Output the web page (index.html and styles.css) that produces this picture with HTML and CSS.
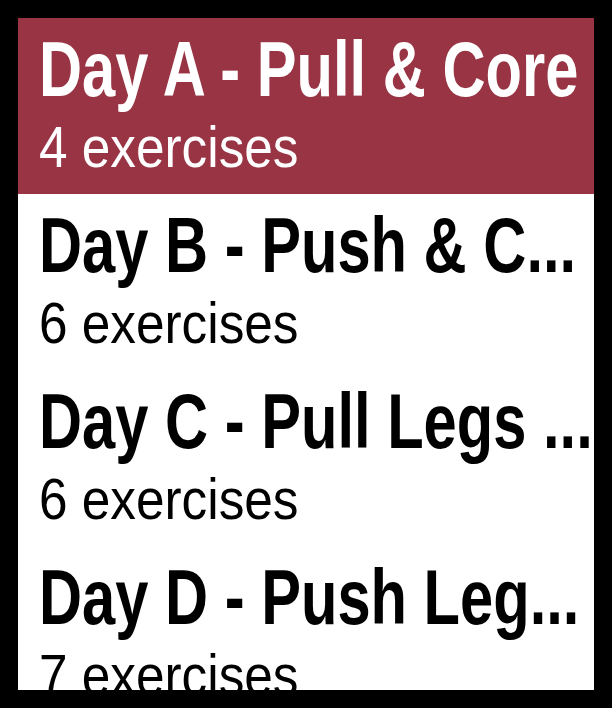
FILE: index.html
```html
<!DOCTYPE html>
<html lang="en">
<head>
<meta charset="utf-8">
<title>Workouts</title>
<link rel="stylesheet" href="styles.css">
</head>
<body>
  <div class="watch">
    <ul class="menu">
      <li class="cell is-selected">
        <span class="cell-title">Day A - Pull &amp; Core</span>
        <span class="cell-sub">4 exercises</span>
      </li>
      <li class="cell">
        <span class="cell-title">Day B - Push &amp; C...</span>
        <span class="cell-sub">6 exercises</span>
      </li>
      <li class="cell">
        <span class="cell-title">Day C - Pull Legs ...</span>
        <span class="cell-sub">6 exercises</span>
      </li>
      <li class="cell">
        <span class="cell-title">Day D - Push Leg...</span>
        <span class="cell-sub">7 exercises</span>
      </li>
    </ul>
  </div>
</body>
</html>
```

FILE: styles.css
```css
html, body {
  margin: 0;
  padding: 0;
  background: #000;
}

body {
  width: 612px;
  height: 708px;
  padding: 18px;
  box-sizing: border-box;
}

.watch {
  width: 576px;
  height: 672px;
  background: #fff;
  overflow: hidden;
}

.menu {
  list-style: none;
  margin: 0;
  padding: 0;
}

.cell {
  height: 176px;
  box-sizing: border-box;
  padding: 12px 0 0 21px;
  display: flex;
  flex-direction: column;
  gap: 11px;
  overflow: hidden;
  background: #fff;
  color: #000;
  font-family: "Liberation Sans", Arial, sans-serif;
}

.cell.is-selected {
  background: #983444;
  color: #fff;
}

.cell-title,
.cell-sub {
  display: block;
  white-space: nowrap;
  transform-origin: left center;
}

.cell-title {
  font-size: 78px;
  line-height: 78px;
  font-weight: 700;
  transform: scaleX(0.765);
}

.cell-sub {
  font-size: 57px;
  line-height: 57px;
  font-weight: 400;
  transform: scaleX(0.9);
}
```
